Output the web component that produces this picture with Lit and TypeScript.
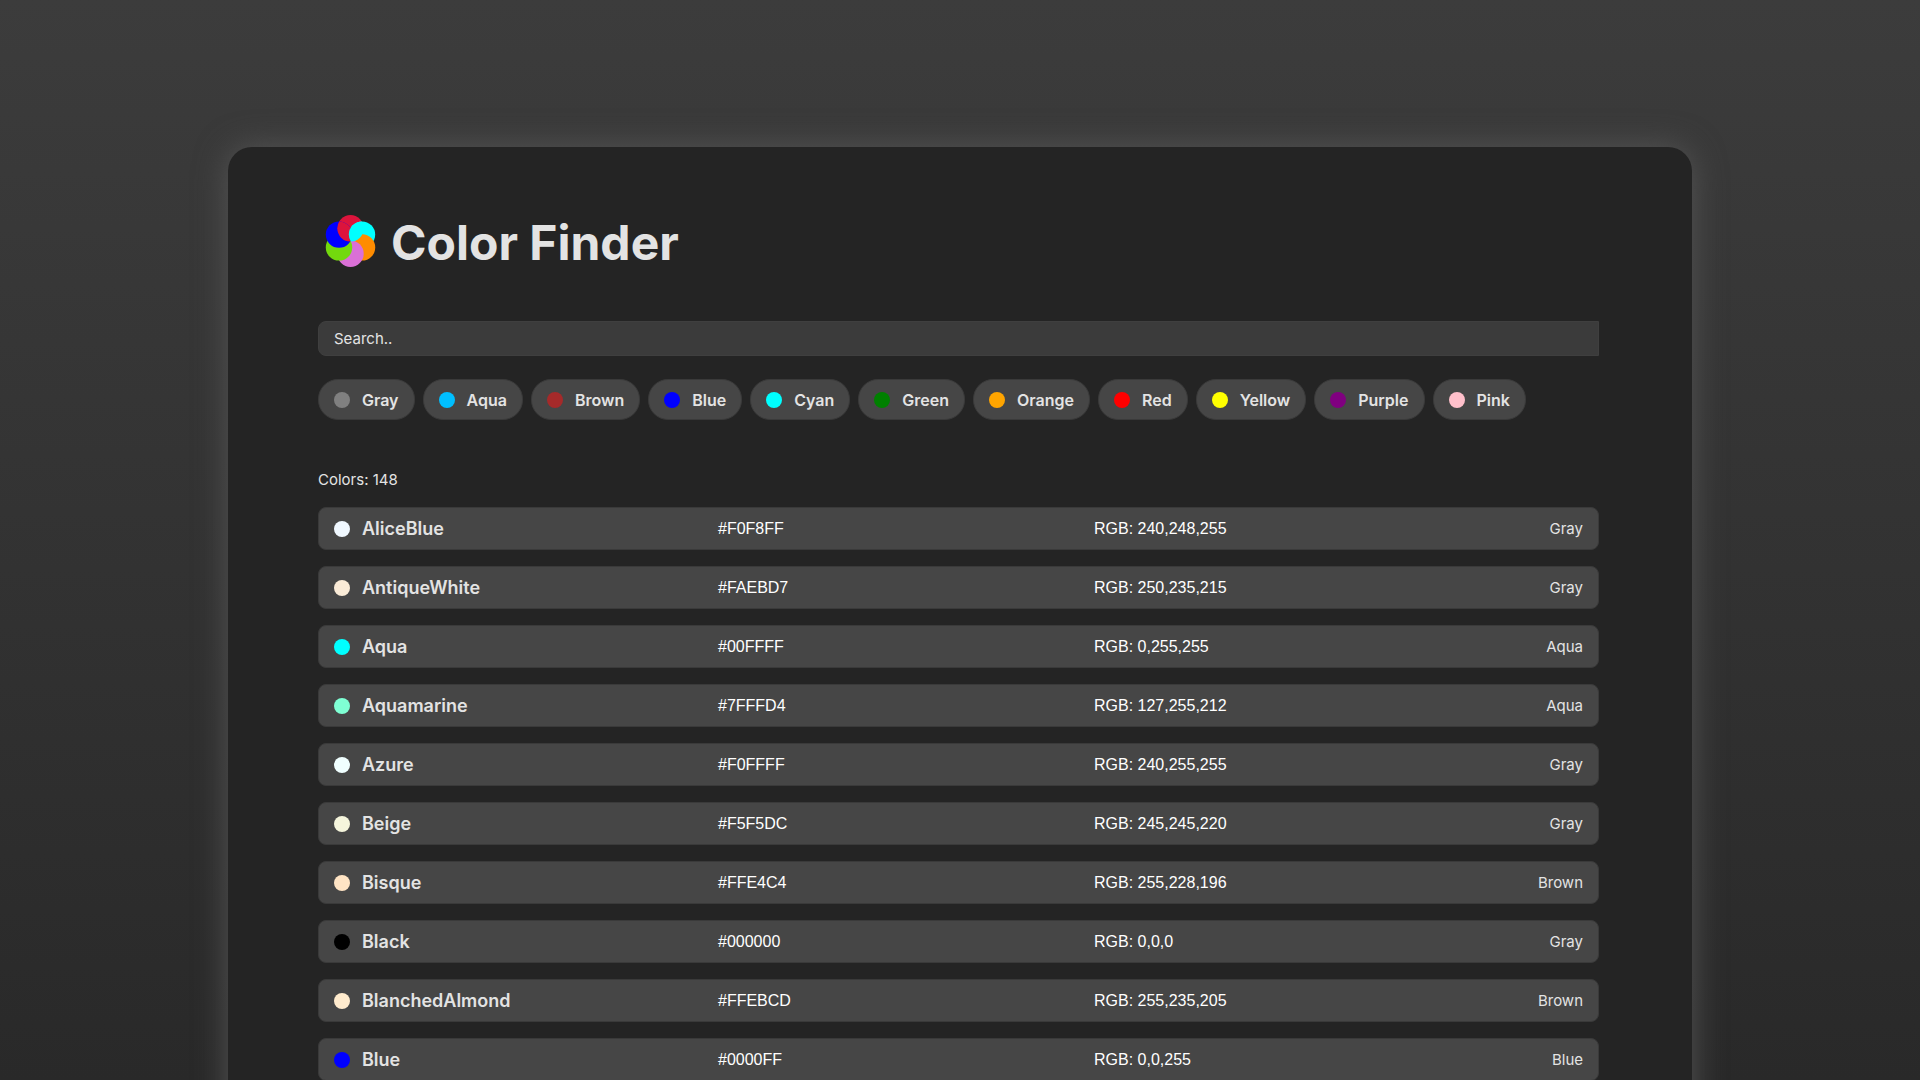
import { LitElement, html, css } from "lit";
import { customElement, state } from "lit/decorators.js";
import { styleMap } from "lit/directives/style-map.js";

interface Group {
  name: string;
  fill: string;
}

interface NamedColor {
  name: string;
  hex: string;
  rgb: string;
  group: string;
}

const TOTAL = 148;

const GROUPS: Group[] = [
  { name: "Gray", fill: "gray" },
  { name: "Aqua", fill: "deepskyblue" },
  { name: "Brown", fill: "brown" },
  { name: "Blue", fill: "blue" },
  { name: "Cyan", fill: "cyan" },
  { name: "Green", fill: "green" },
  { name: "Orange", fill: "orange" },
  { name: "Red", fill: "red" },
  { name: "Yellow", fill: "yellow" },
  { name: "Purple", fill: "purple" },
  { name: "Pink", fill: "pink" },
];

const COLORS: NamedColor[] = [
  { name: "AliceBlue", hex: "#F0F8FF", rgb: "240,248,255", group: "Gray" },
  { name: "AntiqueWhite", hex: "#FAEBD7", rgb: "250,235,215", group: "Gray" },
  { name: "Aqua", hex: "#00FFFF", rgb: "0,255,255", group: "Aqua" },
  { name: "Aquamarine", hex: "#7FFFD4", rgb: "127,255,212", group: "Aqua" },
  { name: "Azure", hex: "#F0FFFF", rgb: "240,255,255", group: "Gray" },
  { name: "Beige", hex: "#F5F5DC", rgb: "245,245,220", group: "Gray" },
  { name: "Bisque", hex: "#FFE4C4", rgb: "255,228,196", group: "Brown" },
  { name: "Black", hex: "#000000", rgb: "0,0,0", group: "Gray" },
  { name: "BlanchedAlmond", hex: "#FFEBCD", rgb: "255,235,205", group: "Brown" },
  { name: "Blue", hex: "#0000FF", rgb: "0,0,255", group: "Blue" },
];

@customElement("app-root")
export class AppRoot extends LitElement {
  static styles = css`
    :host {
      display: block;
      height: 100vh;
      overflow: auto;
      scrollbar-width: none;
      background: linear-gradient(#3c3c3c, #292929);
      color: #e3e3e3;
      font-family: Inter, "Liberation Sans", sans-serif;
      font-size: 15px;
      line-height: 24px;
    }
    * {
      box-sizing: border-box;
    }
    .card {
      max-width: 1464px;
      margin: 147px auto 0;
      padding: 56px 93px 64px 90px;
      border-radius: 24px 24px 0 0;
      background: #242424;
      box-shadow: 0 0 32px #555;
    }
    .brand {
      display: flex;
      align-items: center;
      gap: 8px;
    }
    .logo {
      width: 65px;
      height: 64px;
      flex: none;
    }
    .title {
      margin: 0;
      padding-top: 4px;
      font-size: 48px;
      font-weight: 700;
      line-height: 72px;
    }
    .search {
      display: block;
      width: 100%;
      height: 35px;
      margin-top: 42px;
      padding: 0 15px;
      border: 1px solid #3f3f3f;
      border-radius: 8px 0 0 8px;
      background: #3b3b3b;
      color: #e3e3e3;
      font: inherit;
      outline: none;
    }
    .search::placeholder {
      color: #e3e3e3;
      opacity: 1;
    }
    .groups {
      display: flex;
      flex-wrap: wrap;
      gap: 8px;
      margin-top: 23px;
    }
    .chip {
      display: flex;
      align-items: center;
      gap: 12px;
      height: 41px;
      padding: 0 15px;
      border: 1px solid #3a3a3a;
      border-radius: 20px;
      background: #464646;
      color: inherit;
      font: inherit;
      font-size: 16px;
      font-weight: 600;
    }
    .dot {
      width: 16px;
      height: 16px;
      flex: none;
      border-radius: 50%;
    }
    .count {
      margin: 48px 0 15px;
    }
    .list,
    .rows {
      display: flex;
      flex-direction: column;
      gap: 16px;
    }
    .row {
      display: grid;
      grid-template-columns: 384fr 376fr 377fr 112fr;
      align-items: center;
      height: 43px;
      padding: 0 15px;
      border: 1px solid #3a3a3a;
      border-radius: 8px;
      background: #464646;
    }
    .name,
    .cell {
      padding: 0;
      text-align: left;
    }
    .name {
      display: flex;
      align-items: center;
      gap: 12px;
      font-size: 18px;
      font-weight: 600;
    }
    .group {
      padding: 0;
      text-align: right;
    }
    .copy {
      padding: 0;
      border: 0;
      background: none;
      color: #fff;
      font-family: "Liberation Sans", Arial, sans-serif;
      font-size: 16px;
      line-height: 24px;
      cursor: pointer;
    }
  `;

  @state() private query = "";
  @state() private group = "";

  private get matches() {
    const q = this.query.trim().toLowerCase();
    return COLORS.filter(
      (c) =>
        (!this.group || c.group === this.group) &&
        (!q || c.name.toLowerCase().includes(q))
    );
  }

  private copy(text: string) {
    navigator.clipboard?.writeText(text);
  }

  private renderLogo() {
    // The first two petals are drawn again where they overlap their neighbours,
    // so each petal lies over the one before it all the way round.
    return html`<svg class="logo" viewBox="-32 -32 64 64" aria-hidden="true">
      <clipPath id="blue-petal"><circle cx="-11.5" cy="-6.4" r="13.2" /></clipPath>
      <clipPath id="red-petal"><circle cx="0" cy="-12.7" r="13.2" /></clipPath>
      <circle cx="0" cy="-12.7" r="13.2" fill="crimson" />
      <circle cx="11.5" cy="-6.4" r="13.2" fill="cyan" />
      <circle cx="11.5" cy="6.4" r="13.2" fill="darkorange" />
      <circle cx="0" cy="12.7" r="13.2" fill="orchid" />
      <circle cx="-11.5" cy="6.4" r="13.2" fill="#73d90d" />
      <circle cx="-11.5" cy="-6.4" r="13.2" fill="blue" />
      <circle cx="0" cy="-12.7" r="13.2" fill="crimson" clip-path="url(#blue-petal)" />
      <circle cx="11.5" cy="-6.4" r="13.2" fill="cyan" clip-path="url(#red-petal)" />
    </svg>`;
  }

  private renderRow(c: NamedColor) {
    return html`<tr class="row">
      <th class="name" scope="row">
        <span class="dot" style=${styleMap({ background: c.hex })}></span>${c.name}
      </th>
      <td class="cell">
        <button class="copy" @click=${() => this.copy(c.hex)}>${c.hex}</button>
      </td>
      <td class="cell">
        <button class="copy" @click=${() => this.copy(c.rgb)}>RGB: ${c.rgb}</button>
      </td>
      <td class="group">${c.group}</td>
    </tr>`;
  }

  render() {
    const filtered = this.query || this.group;
    return html`<main class="card">
      <header class="brand">
        ${this.renderLogo()}
        <h1 class="title">Color Finder</h1>
      </header>
      <input
        class="search"
        type="text"
        placeholder="Search.."
        aria-label="Search.."
        .value=${this.query}
        @input=${(e: Event) => (this.query = (e.target as HTMLInputElement).value)}
      />
      <div class="groups">
        ${GROUPS.map(
          (g) => html`<button
            class="chip"
            @click=${() => (this.group = this.group === g.name ? "" : g.name)}
          >
            <span class="dot" style=${styleMap({ background: g.fill })}></span>${g.name}
          </button>`
        )}
      </div>
      <p class="count">Colors: ${filtered ? this.matches.length : TOTAL}</p>
      <table class="list">
        <tbody class="rows">
          ${this.matches.map((c) => this.renderRow(c))}
        </tbody>
      </table>
    </main>`;
  }
}
